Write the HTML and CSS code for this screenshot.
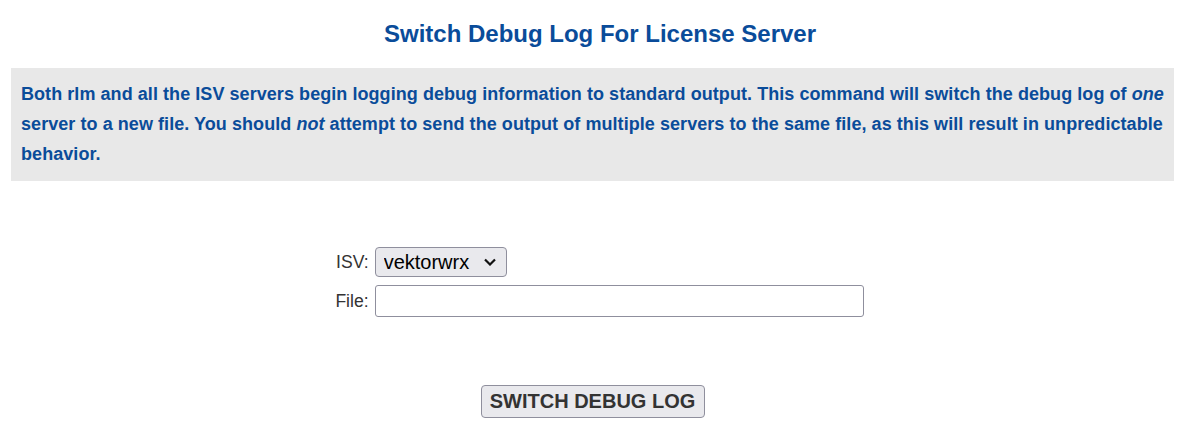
FILE: index.html
```html
<!DOCTYPE html>
<html>
<head>
<meta charset="utf-8">
<link rel="stylesheet" href="styles.css">
</head>
<body>
<div class="page">
  <h2 class="title">Switch Debug Log For License Server</h2>
  <div class="info">Both rlm and all the ISV servers begin logging debug information to standard output. This command will switch the debug log of <i>one</i> server to a new file. You should <i>not</i> attempt to send the output of multiple servers to the same file, as this will result in unpredictable behavior.</div>
  <form class="form">
    <div class="fields">
      <label class="lbl" for="isv">ISV:</label>
      <div class="ctl">
        <select id="isv" class="sel"><option>vektorwrx</option></select>
        <svg class="chev" width="12" height="8" viewBox="0 0 12 8"><path d="M1 1.5 L6 6.5 L11 1.5" fill="none" stroke="#111" stroke-width="2.2"/></svg>
      </div>
      <label class="lbl" for="file">File:</label>
      <div class="ctl"><input id="file" class="txt" type="text"></div>
    </div>
    <div class="actions"><button type="button" class="btn">SWITCH DEBUG LOG</button></div>
  </form>
</div>
</body>
</html>
```
FILE: styles.css
```css
html, body { margin: 0; padding: 0; background: #fff; }
body { font-family: "Liberation Sans", Arial, sans-serif; }
.page { width: 1163px; margin-left: 11px; }
.title {
  margin: 0;
  padding: 20px 0 0 15px;
  height: 28px;
  text-align: center;
  font-size: 24px;
  font-weight: bold;
  color: #0a4c9a;
  line-height: 28px;
}
.info {
  margin-top: 20px;
  background: #e8e8e8;
  padding: 11px 4px 12px 10px;
  font-size: 18px;
  font-weight: bold;
  line-height: 30px;
  letter-spacing: 0.06px;
  color: #0a4c9a;
}
.form { margin: 66px 0 0 0; }
.fields {
  display: grid;
  grid-template-columns: auto auto;
  justify-content: center;
  column-gap: 6px;
  row-gap: 8px;
  align-items: center;
  padding-left: 14px;
}
.lbl { text-align: right; font-size: 17.6px; color: #333; }
.ctl { display: flex; position: relative; }
.sel {
  appearance: none;
  -webkit-appearance: none;
  height: 30px;
  width: 132px;
  font-family: "Liberation Sans", Arial, sans-serif;
  font-size: 20px;
  color: #000;
  background-color: #e9e9ed;
  border: 1px solid #8f8f9d;
  border-radius: 4px;
  padding: 0 0 0 8px;
}
.chev { position: absolute; left: 109px; top: 11px; pointer-events: none; }
.txt {
  box-sizing: border-box;
  width: 489px;
  height: 32px;
  border: 1px solid #8f8f9d;
  border-radius: 3px;
  font-size: 16px;
  padding: 0 6px;
}
.actions { display: flex; justify-content: center; margin-top: 68px; }
.btn {
  width: 224px;
  height: 33px;
  font-family: "Liberation Sans", Arial, sans-serif;
  font-size: 20px;
  font-weight: bold;
  color: #333;
  background: #e9e9ed;
  border: 1px solid #8f8f9d;
  border-radius: 4px;
  padding: 0;
}
```
